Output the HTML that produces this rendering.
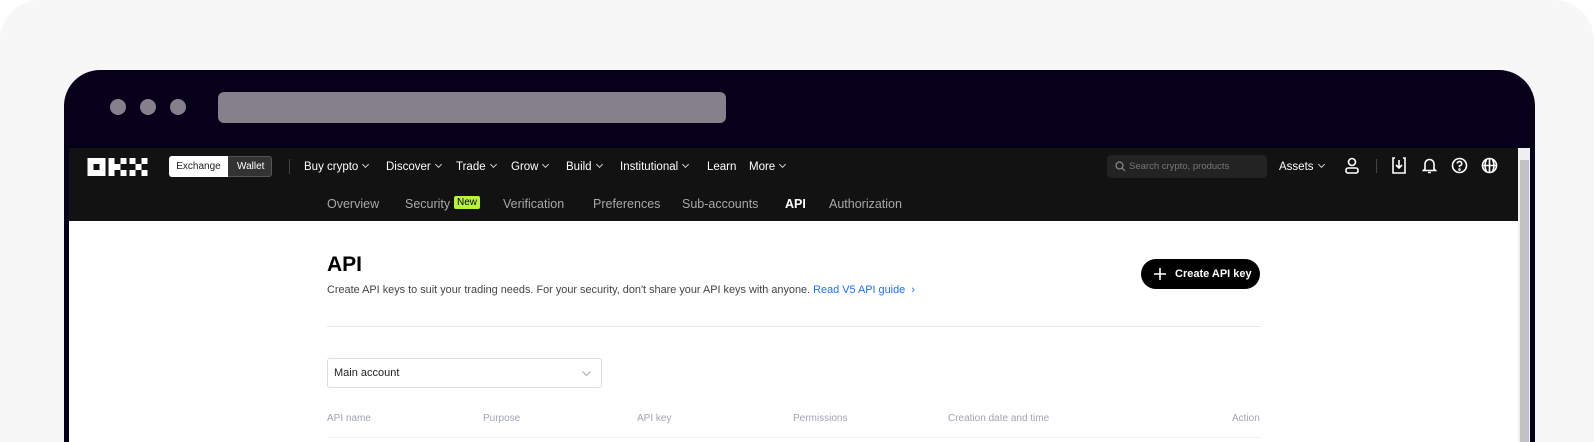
<!DOCTYPE html>
<html><head><meta charset="utf-8"><style>
*{margin:0;padding:0;box-sizing:border-box}
html,body{width:1594px;height:442px;overflow:hidden}
body{background:#fff;font-family:"Liberation Sans",sans-serif;position:relative}
.outer{position:absolute;left:0;top:0;width:1594px;height:442px;background:#f7f7f7;border-radius:40px 40px 0 0}
.win{position:absolute;left:64px;top:70px;width:1471px;height:372px;background:#07001a;border-radius:36px 36px 0 0}
.dot{position:absolute;top:99px;width:16px;height:16px;border-radius:50%;background:#85808c}
.addr{position:absolute;left:218px;top:92px;width:508px;height:31px;border-radius:6px;background:#85808c}
.nav{position:absolute;left:69px;top:148px;width:1449px;height:73px;background:#121212;color:#fff;font-size:11.5px}
.nav span{position:absolute;white-space:nowrap}
.t{top:13px}
.ch{display:inline-block;width:5px;height:5px;border-right:1.2px solid #ccc;border-bottom:1.2px solid #ccc;transform:rotate(45deg);margin-left:5px;position:relative;top:-3px}
.sub{color:#a8a8a8;font-size:12.5px;top:49px}
.content{position:absolute;left:69px;top:221px;width:1449px;height:221px;background:#fff}
.sb{position:absolute;left:1518px;top:148px;width:12px;height:294px;background:#f0f0f0}
.sb div{position:absolute;left:2px;top:12px;width:9px;height:290px;background:#c2c2c2}
.th{position:absolute;top:413px;font-size:10px;color:#a0a4b0}
</style></head><body>
<div class="outer"></div>
<div class="win"></div>
<div class="dot" style="left:110px"></div><div class="dot" style="left:140px"></div><div class="dot" style="left:170px"></div>
<div class="addr"></div>
<div class="nav">
 <svg style="position:absolute;left:18px;top:10px" width="61" height="18" viewBox="0 0 60 18" fill="#fff">
  <rect x="0" y="0" width="18" height="18"/><rect x="6" y="6" width="6" height="6" fill="#121212"/>
  <rect x="21" y="0" width="6" height="18"/><rect x="27" y="6" width="6" height="6"/><rect x="33" y="0" width="6" height="6"/><rect x="33" y="12" width="6" height="6"/>
  <rect x="42" y="0" width="6" height="6"/><rect x="54" y="0" width="6" height="6"/><rect x="48" y="6" width="6" height="6"/><rect x="42" y="12" width="6" height="6"/><rect x="54" y="12" width="6" height="6"/>
 </svg>
 <div style="position:absolute;left:100px;top:8px;width:103px;height:21px;border:1px solid #555;border-radius:3px;background:#333"></div>
 <div style="position:absolute;left:100px;top:8px;width:59px;height:21px;border-radius:3px 0 0 3px;background:#fff;color:#222;font-size:10px;line-height:21px;text-align:center">Exchange</div>
 <span style="left:168px;top:13px;font-size:10px">Wallet</span>
 <div style="position:absolute;left:220px;top:11px;width:1px;height:15px;background:#444"></div>
 <span class="t" style="left:235px">Buy crypto<i class="ch"></i></span>
 <span class="t" style="left:317px">Discover<i class="ch"></i></span>
 <span class="t" style="left:387px">Trade<i class="ch"></i></span>
 <span class="t" style="left:442px">Grow<i class="ch"></i></span>
 <span class="t" style="left:497px">Build<i class="ch"></i></span>
 <span class="t" style="left:551px">Institutional<i class="ch"></i></span>
 <span class="t" style="left:638px">Learn</span>
 <span class="t" style="left:680px">More<i class="ch"></i></span>
 <div style="position:absolute;left:1038px;top:7px;width:160px;height:23px;border-radius:4px;background:#232323"></div>
 <svg style="position:absolute;left:1046px;top:13px" width="11" height="11" viewBox="0 0 11 11" fill="none" stroke="#888" stroke-width="1.2"><circle cx="4.5" cy="4.5" r="3.5"/><path d="M7 7l3 3"/></svg>
 <span style="left:1060px;top:13px;font-size:9.5px;color:#777">Search crypto, products</span>
 <span class="t" style="left:1210px">Assets<i class="ch"></i></span>
 <svg style="position:absolute;left:1275px;top:9px" width="16" height="18" viewBox="0 0 16 18" fill="none" stroke="#fff" stroke-width="1.6"><circle cx="8" cy="5" r="3.5"/><rect x="2" y="11" width="12" height="5" rx="2"/></svg>
 <div style="position:absolute;left:1307px;top:11px;width:1px;height:14px;background:#444"></div>
 <svg style="position:absolute;left:1322px;top:9px" width="16" height="17" viewBox="0 0 16 17" fill="none" stroke="#fff" stroke-width="1.6"><path d="M4 1H2v15h12V1h-2M8 3v8M5 8l3 3 3-3"/></svg>
 <svg style="position:absolute;left:1353px;top:9px" width="15" height="17" viewBox="0 0 15 17" fill="none" stroke="#fff" stroke-width="1.6"><path d="M3 12V7a4.5 4.5 0 0 1 9 0v5l1.5 1.5h-12zM6 15.5h3"/></svg>
 <svg style="position:absolute;left:1382px;top:9px" width="17" height="17" viewBox="0 0 17 17" fill="none" stroke="#fff" stroke-width="1.6"><circle cx="8.5" cy="8.5" r="7"/><path d="M6.3 6.5a2.2 2.2 0 1 1 2.2 2.3v1.5"/><circle cx="8.5" cy="12.5" r=".5"/></svg>
 <svg style="position:absolute;left:1412px;top:9px" width="17" height="17" viewBox="0 0 17 17" fill="none" stroke="#fff" stroke-width="1.6"><circle cx="8.5" cy="8.5" r="7"/><path d="M1.5 8.5h14M8.5 1.5v14M5.5 2.5c-2 4-2 8 0 12M11.5 2.5c2 4 2 8 0 12"/></svg>
 <span class="sub" style="left:258px">Overview</span>
 <span class="sub" style="left:336px">Security</span>
 <span style="left:385px;top:48px;background:#b8f33a;color:#000;font-size:10px;padding:1px 3px;border-radius:2px">New</span>
 <span class="sub" style="left:434px">Verification</span>
 <span class="sub" style="left:524px">Preferences</span>
 <span class="sub" style="left:613px">Sub-accounts</span>
 <span class="sub" style="left:716px;color:#fff;font-weight:bold">API</span>
 <span class="sub" style="left:760px">Authorization</span>
</div>
<div class="content"></div>
<div class="sb"><div></div></div>
<div style="position:absolute;left:327px;top:253px;font-size:21px;font-weight:bold;color:#000">API</div>
<div style="position:absolute;left:327px;top:284px;font-size:10.9px;color:#444;white-space:nowrap">Create API keys to suit your trading needs. For your security, don't share your API keys with anyone. <span style="color:#1f6fff">Read V5 API guide &nbsp;›</span></div>
<div style="position:absolute;left:1141px;top:259px;width:119px;height:30px;border-radius:15px;background:#000;color:#fff;font-size:11px;line-height:30px;padding-left:34px;font-weight:bold">Create API key</div>
<svg style="position:absolute;left:1154px;top:268px" width="12" height="12" viewBox="0 0 12 12" stroke="#fff" stroke-width="1.6"><path d="M6 0v12M0 6h12"/></svg>
<div style="position:absolute;left:327px;top:326px;width:934px;height:1px;background:#e8e8e8"></div>
<div style="position:absolute;left:327px;top:358px;width:275px;height:30px;border:1px solid #ddd;border-radius:3px;font-size:11px;line-height:28px;padding-left:6px;color:#222">Main account<svg style="position:absolute;right:10px;top:12px" width="9" height="5" viewBox="0 0 9 5" fill="none" stroke="#aaa"><path d="M0.5 0.5l4 4 4-4"/></svg></div>
<span class="th" style="left:327px">API name</span>
<span class="th" style="left:483px">Purpose</span>
<span class="th" style="left:637px">API key</span>
<span class="th" style="left:793px">Permissions</span>
<span class="th" style="left:948px">Creation date and time</span>
<span class="th" style="left:1232px">Action</span>
<div style="position:absolute;left:327px;top:437px;width:934px;height:1px;background:#eee"></div>
</body></html>
